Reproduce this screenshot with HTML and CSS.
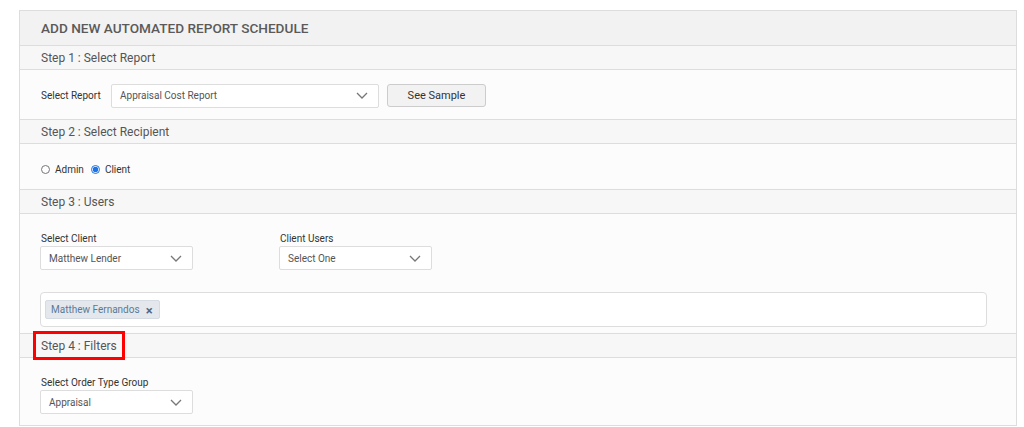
FILE: index.html
```html
<!DOCTYPE html>
<html lang="en">
  <head>
    <meta charset="UTF-8" />
    <meta name="viewport" content="width=device-width, initial-scale=1.0" />
    <title>Automated Report Schedule</title>
    <link rel="stylesheet" href="styles.css">
  </head>
  <body>
    <div class="panel">
      <div class="panel-title">ADD NEW AUTOMATED REPORT SCHEDULE</div>

      <!-- step 1 -->
      <div class="step-head"><span>Step 1 : Select Report</span></div>
      <div class="step-body step1">
        <label class="inline-label">Select Report</label>
        <div class="select report-select">
          <span>Appraisal Cost Report</span>
          <svg class="chev" width="12" height="7" viewBox="0 0 12 7"><polyline points="1,1 6,6 11,1" fill="none" stroke="#777" stroke-width="1.3"/></svg>
        </div>
        <button type="button" class="btn">See Sample</button>
      </div>

      <!-- step 2 -->
      <div class="step-head"><span>Step 2 : Select Recipient</span></div>
      <div class="step-body step2">
        <label class="radio"><input type="radio" name="rcp"> Admin</label>
        <label class="radio"><input type="radio" name="rcp" checked> Client</label>
      </div>

      <!-- step 3 -->
      <div class="step-head"><span>Step 3 : Users</span></div>
      <div class="step-body step3">
        <div class="field-row">
          <div class="field">
            <label>Select Client</label>
            <div class="select small">
              <span>Matthew Lender</span>
              <svg class="chev" width="12" height="7" viewBox="0 0 12 7"><polyline points="1,1 6,6 11,1" fill="none" stroke="#777" stroke-width="1.3"/></svg>
            </div>
          </div>
          <div class="field">
            <label>Client Users</label>
            <div class="select small">
              <span>Select One</span>
              <svg class="chev" width="12" height="7" viewBox="0 0 12 7"><polyline points="1,1 6,6 11,1" fill="none" stroke="#777" stroke-width="1.3"/></svg>
            </div>
          </div>
        </div>
        <div class="tag-box">
          <span class="tag">Matthew Fernandos <b>&times;</b></span>
        </div>
      </div>

      <!-- step 4 -->
      <div class="step-head"><span class="marked">Step 4 : Filters</span></div>
      <div class="step-body step4">
        <div class="field">
          <label>Select Order Type Group</label>
          <div class="select small">
            <span>Appraisal</span>
            <svg class="chev" width="12" height="7" viewBox="0 0 12 7"><polyline points="1,1 6,6 11,1" fill="none" stroke="#777" stroke-width="1.3"/></svg>
          </div>
        </div>
      </div>
    </div>
  </body>
</html>
```

FILE: styles.css
```css
* {
  padding: 0;
  margin: 0;
  box-sizing: border-box;
}
body {
  background: #fff;
  font-family: Roboto, "Liberation Sans", sans-serif;
  color: #444;
}
button {
  font-family: inherit;
  cursor: pointer;
}

.panel {
  margin: 10px 0 0 19px;
  width: 998px;
  border: 1px solid #ddd;
  background: #fcfcfc;
}
.panel-title {
  height: 35px;
  padding-left: 21px;
  display: flex;
  align-items: center;
  background: #f2f2f2;
  border-bottom: 1px solid #ddd;
  font-size: 13.6px;
  font-weight: 500;
  color: #5a5a5a;
}

.step-head {
  height: 24px;
  padding-left: 21px;
  display: flex;
  align-items: center;
  background: #f7f7f7;
  border-bottom: 1px solid #ddd;
  font-size: 12px;
  color: #555;
}
.step-head .marked {
  position: relative;
}
.step-head .marked::after {
  content: "";
  position: absolute;
  left: -8px;
  right: -8px;
  top: -8px;
  bottom: -7px;
  border: 3px solid #f00;
}

.step-body {
  border-bottom: 1px solid #ddd;
  padding-left: 20px;
}
.step4 {
  border-bottom: none;
}

.step1 {
  height: 50px;
  display: flex;
  align-items: center;
  padding-top: 2px;
}
.inline-label {
  font-size: 10px;
  color: #333;
  padding-left: 1px;
  width: 71px;
}

.select {
  display: flex;
  align-items: center;
  justify-content: space-between;
  height: 24px;
  background: #fff;
  border: 1px solid #ddd;
  border-radius: 2px;
  padding: 0 10px 0 8px;
  font-size: 10px;
  color: #555;
}
.report-select {
  width: 268px;
}
.select.small {
  width: 153px;
}

.btn {
  margin-left: 8px;
  width: 99px;
  height: 23px;
  background: #f2f2f2;
  border: 1px solid #ccc;
  border-radius: 3px;
  font-size: 11px;
  color: #333;
}

.step2 {
  height: 46px;
  display: flex;
  align-items: center;
  gap: 7px;
  padding-top: 5px;
  padding-left: 21px;
}
.radio {
  display: flex;
  align-items: center;
  gap: 5px;
  font-size: 10px;
  color: #333;
}
.radio input {
  width: 9px;
  height: 9px;
  margin: 0;
  accent-color: #1a73e8;
}

.step3 {
  height: 120px;
  padding-top: 19px;
}
.field-row {
  display: flex;
  gap: 86px;
}
.field label {
  display: block;
  font-size: 10px;
  color: #333;
  margin-bottom: 2px;
  padding-left: 1px;
}

.tag-box {
  margin-top: 22px;
  width: 947px;
  height: 35px;
  border: 1px solid #ddd;
  border-radius: 4px;
  background: #fff;
  padding: 5px 4px;
}
.tag {
  display: inline-flex;
  align-items: flex-end;
  gap: 6px;
  height: 19px;
  padding: 0 6px 0 5px;
  background: #e4e8ed;
  border: 1px solid #d5dbe2;
  border-radius: 2px;
  font-size: 10px;
  line-height: 17px;
  color: #5a7a96;
}
.tag b {
  font-size: 13px;
  line-height: 14px;
  color: #4b6a86;
}

.step4 {
  height: 67px;
  padding-top: 19px;
}
```
